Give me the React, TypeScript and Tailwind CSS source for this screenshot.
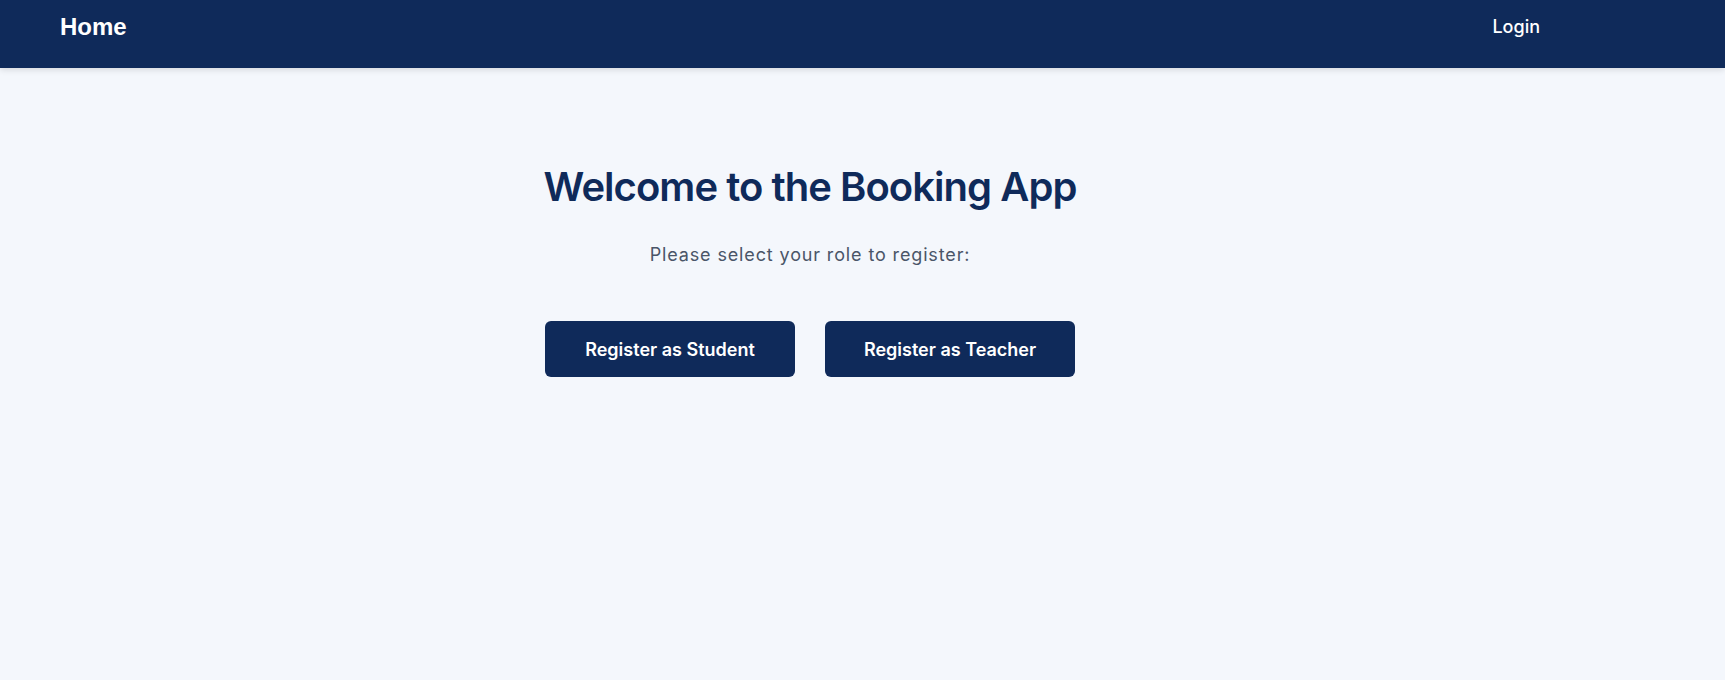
import React from "react";

export default function App() {
  return (
    <div className="min-h-[680px] bg-[#f4f7fc] font-['Inter',sans-serif]">
      <nav className="relative z-10 flex h-[68px] items-start justify-between bg-[#0f2a5a] pl-[60px] pr-[185px] pt-[11px] shadow-[0_2px_6px_rgba(0,0,0,0.12)]">
        <a className="font-['Liberation_Sans',Arial,sans-serif] text-[24px] font-bold leading-[32px] text-white">
          Home
        </a>
        <a className="pt-[2px] text-[18px] font-medium leading-[28px] text-white">Login</a>
      </nav>
      <main className="flex flex-col items-center pr-[105px] pt-[95px]">
        <h1 className="text-[40px] font-semibold leading-[48px] tracking-[-0.024em] text-[#0f2a5a]">
          Welcome to the Booking App
        </h1>
        <p className="mt-[30px] text-[18px] leading-[28px] tracking-[0.048em] text-[#4a5568]">
          Please select your role to register:
        </p>
        <div className="mt-[52px] flex gap-[30px]">
          <button className="h-[56px] w-[250px] rounded-[6px] bg-[#0f2a5a] text-[18px] font-semibold text-white">
            Register as Student
          </button>
          <button className="h-[56px] w-[250px] rounded-[6px] bg-[#0f2a5a] text-[18px] font-semibold text-white">
            Register as Teacher
          </button>
        </div>
      </main>
    </div>
  );
}
